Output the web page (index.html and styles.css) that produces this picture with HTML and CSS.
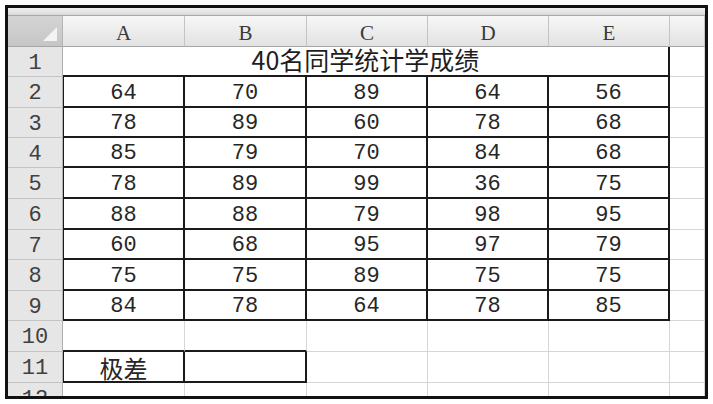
FILE: index.html
```html
<!DOCTYPE html>
<html lang="zh">
<head>
<meta charset="utf-8">
<link rel="stylesheet" href="styles.css">
</head>
<body>
<div class="frame">
  <div class="strip"></div>
  <div class="sheet">
    <div class="corner"><span class="tri"></span></div>
    <div class="hd">A</div><div class="hd">B</div><div class="hd">C</div><div class="hd">D</div><div class="hd">E</div><div class="hd"></div>

    <div class="rh">1</div>
    <div class="title">40名同学统计学成绩</div>
    <div class="c"></div>

    <div class="rh">2</div>
    <div class="c b first">64</div><div class="c b">70</div><div class="c b">89</div><div class="c b">64</div><div class="c b">56</div><div class="c"></div>
    <div class="rh">3</div>
    <div class="c b first">78</div><div class="c b">89</div><div class="c b">60</div><div class="c b">78</div><div class="c b">68</div><div class="c"></div>
    <div class="rh">4</div>
    <div class="c b first">85</div><div class="c b">79</div><div class="c b">70</div><div class="c b">84</div><div class="c b">68</div><div class="c"></div>
    <div class="rh">5</div>
    <div class="c b first">78</div><div class="c b">89</div><div class="c b">99</div><div class="c b">36</div><div class="c b">75</div><div class="c"></div>
    <div class="rh">6</div>
    <div class="c b first">88</div><div class="c b">88</div><div class="c b">79</div><div class="c b">98</div><div class="c b">95</div><div class="c"></div>
    <div class="rh">7</div>
    <div class="c b first">60</div><div class="c b">68</div><div class="c b">95</div><div class="c b">97</div><div class="c b">79</div><div class="c"></div>
    <div class="rh">8</div>
    <div class="c b first">75</div><div class="c b">75</div><div class="c b">89</div><div class="c b">75</div><div class="c b">75</div><div class="c"></div>
    <div class="rh">9</div>
    <div class="c b first">84</div><div class="c b">78</div><div class="c b">64</div><div class="c b">78</div><div class="c b">85</div><div class="c"></div>

    <div class="rh">10</div>
    <div class="c above"></div><div class="c above"></div><div class="c"></div><div class="c"></div><div class="c"></div><div class="c"></div>

    <div class="rh">11</div>
    <div class="c b first cjk">极差</div><div class="c b"></div><div class="c"></div><div class="c"></div><div class="c"></div><div class="c"></div>

    <div class="rh">12</div>
    <div class="c"></div><div class="c"></div><div class="c"></div><div class="c"></div><div class="c"></div><div class="c"></div>
  </div>
</div>
</body>
</html>
```

FILE: styles.css
```css
* { box-sizing: border-box; }

html, body {
  margin: 0;
  padding: 0;
  background: #ffffff;
}

body {
  width: 713px;
  height: 404px;
  overflow: hidden;
}

.frame {
  margin: 5px 0 0 5px;
  width: 703px;
  height: 394px;
  border: 3px solid #111111;
  overflow: hidden;
  background: #ffffff;
}

.strip {
  height: 8px;
  background: linear-gradient(#f2f2f2, #dadada);
  border-bottom: 1px solid #a9a9a9;
}

.sheet {
  display: grid;
  grid-template-columns: 55px 122px 122px 121px 121px 121px 35px;
  grid-template-rows: 31px 30px 31px 30px 30px 31px 31px 30px 31px 30px 31px 31px 30px;
  font-family: "Liberation Mono", "DejaVu Sans Mono", monospace;
  font-size: 22px;
  line-height: 1;
  color: #262626;
}

.corner {
  position: relative;
  background: linear-gradient(#d4d4d4, #c6c6c6);
  border-right: 1px solid #b4b4b4;
  border-bottom: 1px solid #a6a6a6;
}

.tri {
  position: absolute;
  right: 5px;
  bottom: 5px;
  width: 0;
  height: 0;
  border-left: 14px solid transparent;
  border-bottom: 14px solid #f4f4f4;
}

.hd {
  display: flex;
  align-items: center;
  justify-content: center;
  padding-top: 4px;
  background: linear-gradient(#f7f7f7, #e2e2e2);
  border-right: 1px solid #c4c4c4;
  border-bottom: 1px solid #a6a6a6;
  color: #3a3a3a;
  font-family: "Liberation Serif", serif;
  font-size: 21px;
}

.rh {
  display: flex;
  align-items: center;
  justify-content: center;
  padding-top: 4px;
  background: #e6e6e6;
  border-right: 1px solid #b0b0b0;
  border-bottom: 1px solid #c4c4c4;
  color: #404040;
}

.c {
  display: flex;
  align-items: center;
  justify-content: center;
  padding-top: 4px;
  border-right: 1px solid #d6d6d6;
  border-bottom: 1px solid #d6d6d6;
}

.title {
  grid-column: span 5;
  display: flex;
  align-items: center;
  justify-content: center;
  padding-bottom: 3px;
  font-family: "Noto Sans CJK SC", sans-serif;
  font-size: 25px;
  line-height: 1;
  color: #1e1e1e;
  border-right: 2px solid #1a1a1a;
  border-bottom: 2px solid #1a1a1a;
}

.c.b {
  border-right: 2px solid #1a1a1a;
  border-bottom: 2px solid #1a1a1a;
}

.c.first {
  border-left: 1px solid #1a1a1a;
}

.c.above {
  border-bottom: 2px solid #1a1a1a;
}

.cjk {
  font-family: "Noto Sans CJK SC", sans-serif;
  font-size: 24px;
  line-height: 1;
  padding-top: 2px;
}
```
